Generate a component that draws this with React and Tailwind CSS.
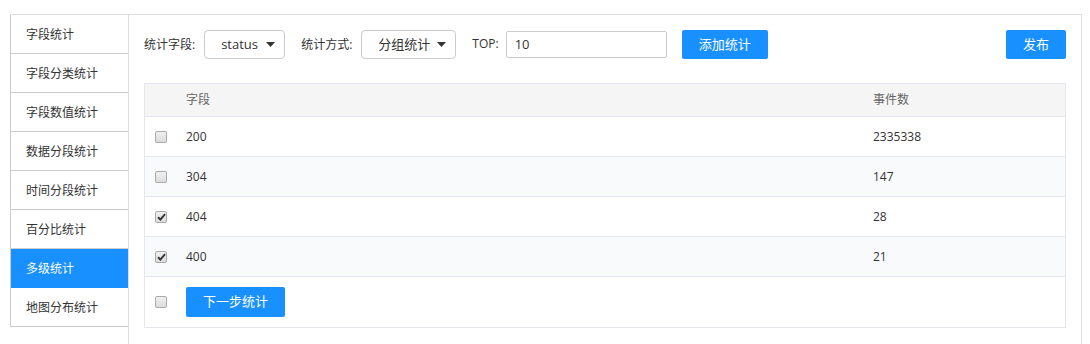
import React from "react";

const FONT = { fontFamily: '"Open Sans", "Noto Sans CJK SC", sans-serif' };

const navItems = [
  "字段统计",
  "字段分类统计",
  "字段数值统计",
  "数据分段统计",
  "时间分段统计",
  "百分比统计",
  "多级统计",
  "地图分布统计",
];

const rows = [
  { k: "200", v: "2335338", checked: false },
  { k: "304", v: "147", checked: false },
  { k: "404", v: "28", checked: true },
  { k: "400", v: "21", checked: true },
];

function Caret() {
  return (
    <svg width="9" height="5" viewBox="0 0 9 5" className="shrink-0">
      <path d="M0 0 L9 0 L4.5 5 Z" fill="#333" />
    </svg>
  );
}

function Checkbox({ checked }) {
  return (
    <span className="w-[12px] h-[12px] rounded-[2px] border border-[#a9a9a9] bg-gradient-to-b from-[#f1f1f1] to-[#dcdcdc] flex items-center justify-center">
      {checked && (
        <svg width="9" height="8" viewBox="0 0 9 8">
          <path d="M1 4.2 L3.4 6.5 L8 1.2" stroke="#333" strokeWidth="1.9" fill="none" />
        </svg>
      )}
    </span>
  );
}

export default function App() {
  return (
    <div className="w-[1090px] h-[344px] bg-white pt-[14px] pl-[10px] pr-[8px] overflow-hidden" style={FONT}>
      <div className="flex h-[330px] border-t border-r border-[#dddddd]">
        <nav className="w-[118px] shrink-0 self-start border-l border-[#cccccc]">
          {navItems.map((t) => {
            const active = t === "多级统计";
            return (
              <div
                key={t}
                className={
                  "h-[39px] flex items-center pl-[15px] pt-[1px] text-[12px] border-b " +
                  (active
                    ? "bg-[#1890ff] text-white border-[#1890ff]"
                    : "text-[#333] border-[#cccccc]")
                }
              >
                {t}
              </div>
            );
          })}
        </nav>
        <div className="flex-1 border-l border-[#dddddd] px-[15px] pt-[15px]">
          <div className="flex items-center h-[29px]">
            <span className="text-[12px] text-[#333]">统计字段:</span>
            <div className="ml-[9px] w-[81px] h-[29px] border border-[#cccccc] rounded-[4px] flex items-center pl-[16px] pr-[9px] justify-between">
              <span className="text-[13px] text-[#333]">status</span>
              <Caret />
            </div>
            <span className="ml-[16px] text-[12px] text-[#333]">统计方式:</span>
            <div className="ml-[9px] w-[95px] h-[29px] border border-[#cccccc] rounded-[4px] flex items-center pl-[16px] pr-[9px] justify-between">
              <span className="text-[13px] text-[#333]">分组统计</span>
              <Caret />
            </div>
            <span className="ml-[16px] text-[12px] text-[#333] -mt-[2px]">TOP:</span>
            <div className="ml-[7px] w-[161px] h-[27px] border border-[#cccccc] rounded-[2px] flex items-center pl-[8px] text-[13px] text-[#333]">
              10
            </div>
            <button className="ml-[15px] w-[86px] h-[29px] rounded-[2px] bg-[#1890ff] text-white text-[13px]">
              添加统计
            </button>
            <button className="ml-auto w-[60px] h-[29px] rounded-[2px] bg-[#1890ff] text-white text-[13px]">
              发布
            </button>
          </div>

          <div className="mt-[24px] border border-[#e4e7ed]">
            <div className="grid grid-cols-[41px_687px_1fr] h-[33px] items-center bg-[#f5f5f5] border-b border-[#e4e7ed] text-[12px] text-[#666]">
              <span />
              <span>字段</span>
              <span>事件数</span>
            </div>
            {rows.map((r, i) => (
              <div
                key={r.k}
                className={
                  "grid grid-cols-[41px_687px_1fr] h-[40px] items-center border-b border-[#e4e7ed] text-[12px] text-[#333] " +
                  (i % 2 === 1 ? "bg-[#f9fafc]" : "bg-white")
                }
              >
                <span className="pl-[10px] flex"><Checkbox checked={r.checked} /></span>
                <span>{r.k}</span>
                <span>{r.v}</span>
              </div>
            ))}
            <div className="grid grid-cols-[41px_687px_1fr] h-[50px] items-center">
              <span className="pl-[10px] flex"><Checkbox checked={false} /></span>
              <span>
                <button className="w-[99px] h-[30px] rounded-[2px] bg-[#1890ff] text-white text-[13px]">
                  下一步统计
                </button>
              </span>
              <span />
            </div>
          </div>
        </div>
      </div>
    </div>
  );
}
